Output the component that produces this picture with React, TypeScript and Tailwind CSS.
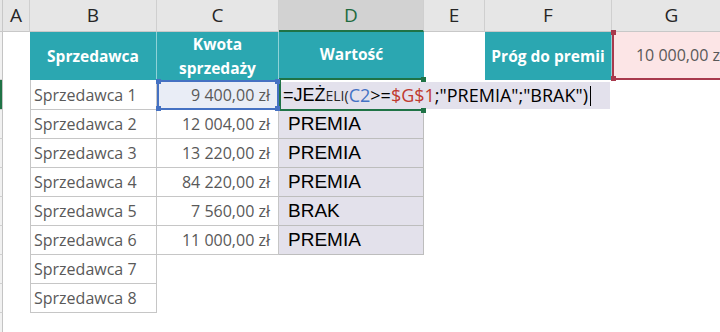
import { ReactNode } from 'react'

const sans = "font-['Open_Sans',sans-serif]"
const arial = "font-['Liberation_Sans',Arial,sans-serif]"

const rows = [
  { name: 'Sprzedawca 2', amount: '12 004,00 zł', value: 'PREMIA' },
  { name: 'Sprzedawca 3', amount: '13 220,00 zł', value: 'PREMIA' },
  { name: 'Sprzedawca 4', amount: '84 220,00 zł', value: 'PREMIA' },
  { name: 'Sprzedawca 5', amount: '7 560,00 zł', value: 'BRAK' },
  { name: 'Sprzedawca 6', amount: '11 000,00 zł', value: 'PREMIA' },
]

function Handle({ className }: { className: string }) {
  return <span className={'absolute w-[5px] h-[5px] z-10 ' + className} />
}

function RowHead({ active }: { active?: boolean }) {
  return (
    <div
      className={
        'border-r border-b border-r-[#c4c4c4] border-b-[#d0d0d0] ' +
        (active ? 'bg-[#1f7346]' : 'bg-[#f1f1f1]')
      }
    />
  )
}

function ColHead({ children, active }: { children?: ReactNode; active?: boolean }) {
  return (
    <div
      className={
        'flex items-center justify-center border-r border-[#cfcfcf] text-[19px] ' +
        sans +
        (active
          ? ' bg-[#d2d2d2] text-[#1e6b40] border-b-2 border-b-[#1f7346]'
          : ' bg-[#e6e6e6] text-[#262626] border-b border-b-[#c8c8c8]')
      }
    >
      {children}
    </div>
  )
}

function TealCell({ children }: { children: ReactNode }) {
  return (
    <div
      className={
        'flex items-center justify-center text-center bg-[#2ba7b1] text-white font-bold text-[15.5px] leading-[24px] border-r border-[#8fd2d7] ' +
        sans
      }
    >
      {children}
    </div>
  )
}

export default function App() {
  return (
    <div className="w-[720px] h-[332px] overflow-hidden bg-white">
      <div className="grid grid-cols-[3px_27px_127px_122px_145px_61px_127px_120px] grid-rows-[32px_48px_30px_29px_29px_29px_29px_29px_29px_29px_29px] w-[732px]">
        {/* column letters */}
        <div className="bg-[#e6e6e6] border-r border-b border-[#c8c8c8]" />
        <ColHead>A</ColHead>
        <ColHead>B</ColHead>
        <ColHead>C</ColHead>
        <ColHead active>D</ColHead>
        <ColHead>E</ColHead>
        <ColHead>F</ColHead>
        <ColHead>G</ColHead>

        {/* row 1 */}
        <RowHead />
        <div />
        <TealCell>Sprzedawca</TealCell>
        <TealCell>
          Kwota
          <br />
          sprzedaży
        </TealCell>
        <div
          className={
            'flex items-center justify-center bg-[#2ba7b1] text-white font-bold text-[15.5px] border-b-2 border-[#1f7346] ' +
            sans
          }
        >
          Wartość
        </div>
        <div />
        <TealCell>Próg do premii</TealCell>
        <div
          className={
            'relative flex items-center justify-end pr-[8px] bg-[#fce5e6] border-l-2 border-b-2 border-[#a83a4d] text-[16px] text-[#595959] whitespace-nowrap ' +
            sans
          }
        >
          <Handle className="-left-[3px] -top-[2px] bg-[#a83a4d]" />
          <Handle className="-left-[3px] -bottom-[3px] bg-[#a83a4d]" />
          10 000,00 zł
        </div>

        {/* row 2 */}
        <RowHead active />
        <div />
        <div
          className={
            'flex items-center pl-[3px] border-l border-r border-b border-[#c6c6c6] text-[16px] text-[#595959] ' +
            sans
          }
        >
          Sprzedawca 1
        </div>
        <div
          className={
            'relative flex items-center justify-end pr-[7px] bg-[#e9edf6] border-2 border-[#4571c2] text-[16px] text-[#595959] ' +
            sans
          }
        >
          <Handle className="-left-[3px] -top-[3px] bg-[#4571c2]" />
          <Handle className="-right-[3px] -top-[3px] bg-[#4571c2]" />
          <Handle className="-left-[3px] -bottom-[3px] bg-[#4571c2]" />
          <Handle className="-right-[3px] -bottom-[3px] bg-[#4571c2]" />
          9 400,00 zł
        </div>
        <div className="col-span-3 relative">
          <div className="absolute left-0 top-0 bottom-0 w-[2px] bg-[#1f7346]" />
          <div className="absolute left-0 -bottom-px w-[145px] h-[2px] bg-[#1f7346]" />
          <Handle className="left-[142px] -bottom-[3px] bg-[#1f7346]" />
          <Handle className="left-[142px] -top-[3px] bg-[#1f7346]" />
          <div className="ml-[2px] mt-[2px] h-[27px] w-[329px] bg-[#e3e1ec] flex items-center pl-[2px] whitespace-nowrap text-black">
            <span className={arial + ' text-[18px]'}>=JEŻ</span>
            <span className={sans + ' text-[14px] text-[#262626]'}>ELI(</span>
            <span className={sans + ' text-[18px] text-[#4472c4]'}>C2</span>
            <span className={sans + ' text-[18px]'}>&gt;=</span>
            <span className={sans + ' text-[18px] text-[#c0392f]'}>$G$1</span>
            <span className={sans + ' text-[18px]'}>;"PREMIA";"BRAK")</span>
            <span className="ml-[2px] w-px h-[20px] bg-black" />
          </div>
        </div>
        <div />

        {/* rows 3-7 */}
        {rows.map(r => (
          <Row key={r.name} {...r} />
        ))}

        {/* rows 8-9 */}
        {['Sprzedawca 7', 'Sprzedawca 8'].map(n => (
          <NameOnly key={n} name={n} />
        ))}

        {/* row 10 */}
        <RowHead />
      </div>
    </div>
  )
}

function Row({ name, amount, value }: { name: string; amount: string; value: string }) {
  return (
    <>
      <RowHead />
      <div />
      <div
        className={
          'flex items-center pl-[3px] border-l border-r border-b border-[#c6c6c6] text-[16px] text-[#595959] ' +
          sans
        }
      >
        {name}
      </div>
      <div
        className={
          'flex items-center justify-end pr-[8px] border-r border-b border-[#c6c6c6] text-[16px] text-[#595959] ' +
          sans
        }
      >
        {amount}
      </div>
      <div
        className={
          'flex items-center pl-[9px] bg-[#e3e1eb] border-r border-b border-[#bdbdbd] text-[19px] text-black ' +
          arial
        }
      >
        {value}
      </div>
      <div />
      <div />
      <div />
    </>
  )
}

function NameOnly({ name }: { name: string }) {
  return (
    <>
      <RowHead />
      <div />
      <div
        className={
          'flex items-center pl-[3px] border-l border-r border-b border-[#c6c6c6] text-[16px] text-[#595959] ' +
          sans
        }
      >
        {name}
      </div>
      <div />
      <div />
      <div />
      <div />
      <div />
    </>
  )
}
